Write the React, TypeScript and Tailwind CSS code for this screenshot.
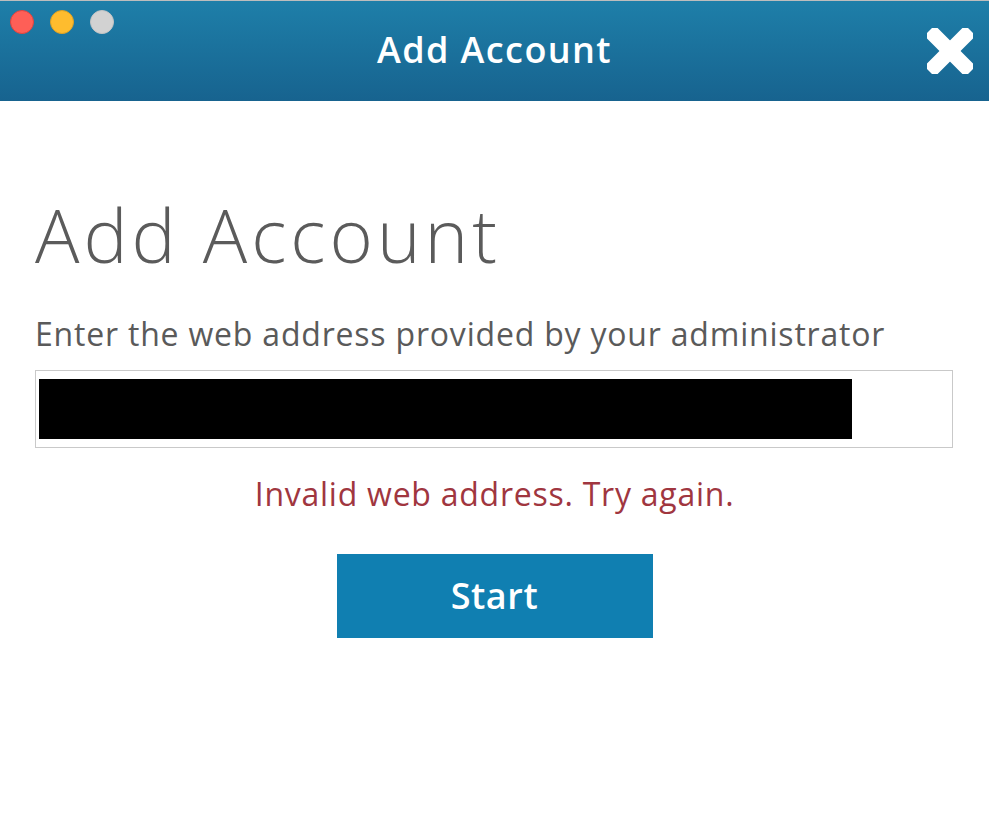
import React from "react";

function CloseIcon() {
  return (
    <svg width="46" height="46" viewBox="0 0 46 46" aria-hidden="true">
      <g transform="translate(23 23) rotate(45)">
        <rect x="-29" y="-7.5" width="58" height="15" rx="3" fill="#fff" />
        <rect x="-7.5" y="-29" width="15" height="58" rx="3" fill="#fff" />
      </g>
    </svg>
  );
}

export default function App() {
  const font = { fontFamily: "'Open Sans', Lato, sans-serif" };

  return (
    <div className="flex h-[814px] w-[989px] flex-col bg-white" style={font}>
      <header className="flex h-[101px] items-center border-t border-[#bdbdbd] bg-gradient-to-b from-[#1e7fa9] to-[#17638f] px-[10px]">
        <div className="flex w-[150px] self-start pt-[9px] gap-[16px]">
          <span className="h-[24px] w-[24px] rounded-full border border-[#e0443e] bg-[#fe5f57]" />
          <span className="h-[24px] w-[24px] rounded-full border border-[#dea123] bg-[#febc2e]" />
          <span className="h-[24px] w-[24px] rounded-full border border-[#c4c4c4] bg-[#d2d2d2]" />
        </div>
        <h1 className="flex-1 pb-[2px] text-center text-[36px] font-semibold leading-none tracking-[1.4px] text-white">Add Account</h1>
        <div className="flex w-[150px] justify-end pr-[6px]">
          <CloseIcon />
        </div>
      </header>

      <main className="flex flex-col px-[35px] pt-[97px]">
        <h2 className="text-[74px] font-light leading-none tracking-[4px] text-[#5b5b5b]">Add Account</h2>
        <p className="mt-[46px] text-[32px] leading-none tracking-[0.8px] text-[#5a5a5a]">
          Enter the web address provided by your administrator
        </p>
        <div className="mt-[20px] h-[78px] w-[918px] border border-[#c9c9c9] bg-white px-[3px] py-[8px]">
          <div className="h-full w-[813px] bg-black" />
        </div>
        <p className="mt-[30px] text-center text-[32px] leading-none tracking-[0.75px] text-[#a0363f]">
          Invalid web address. Try again.
        </p>
        <button
          type="button"
          className="mx-auto mt-[44px] flex h-[84px] w-[316px] items-center justify-center bg-[#107fb1] text-[36px] font-semibold tracking-[0.6px] text-white"
        >
          Start
        </button>
      </main>
    </div>
  );
}
